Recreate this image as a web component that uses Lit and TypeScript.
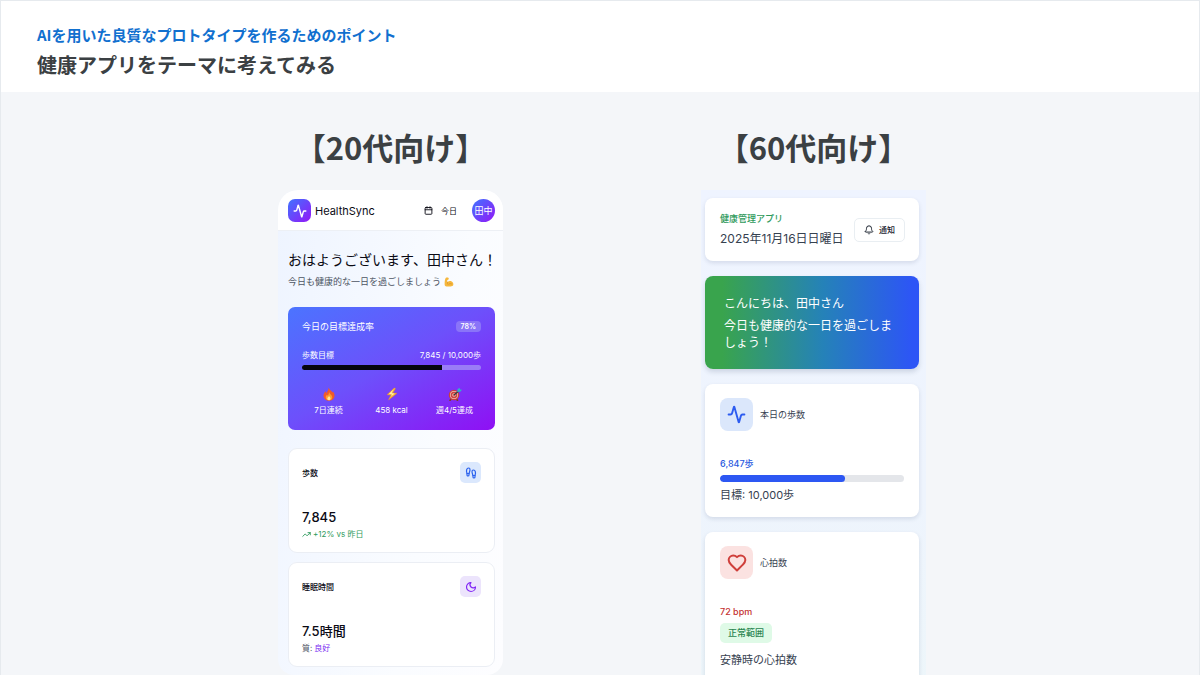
import { LitElement, html, css, svg, TemplateResult } from "lit";
import { customElement, property } from "lit/decorators.js";
import { styleMap } from "lit/directives/style-map.js";

const glyphs: Record<string, TemplateResult> = {
  pulse: svg`<path d="M22 12h-2.48a2 2 0 0 0-1.93 1.46l-2.35 8.36a.25.25 0 0 1-.48 0L9.24 2.18a.25.25 0 0 0-.48 0l-2.35 8.36A2 2 0 0 1 4.49 12H2"/>`,
  calendar: svg`<path d="M8 2v4M16 2v4M3 10h18"/><rect x="3" y="4" width="18" height="18" rx="2"/>`,
  footprints: svg`<path d="M4 16v-2.38C4 11.5 2.97 10.5 3 8c.03-2.72 1.49-6 4.5-6C9.37 2 10 3.8 10 5.5c0 3.11-2 5.66-2 8.68V16a2 2 0 1 1-4 0Z"/><path d="M20 20v-2.38c0-2.12 1.03-3.12 1-5.62-.03-2.72-1.49-6-4.5-6C14.63 6 14 7.8 14 9.5c0 3.11 2 5.66 2 8.68V20a2 2 0 1 0 4 0Z"/><path d="M16 17h4M4 13h4"/>`,
  moon: svg`<path d="M12 3a6 6 0 0 0 9 9 9 9 0 1 1-9-9Z"/>`,
  trend: svg`<path d="m22 7-8.5 8.5-5-5L2 17"/><path d="M16 7h6v6"/>`,
  bell: svg`<path d="M10.27 21a2 2 0 0 0 3.46 0"/><path d="M3.26 15.33A1 1 0 0 0 4 17h16a1 1 0 0 0 .74-1.67C19.41 13.96 18 12.5 18 8A6 6 0 0 0 6 8c0 4.5-1.41 5.96-2.74 7.33"/>`,
  heart: svg`<path d="M19 14c1.49-1.46 3-3.21 3-5.5A5.5 5.5 0 0 0 16.5 3c-1.76 0-3 .5-4.5 2-1.5-1.5-2.74-2-4.5-2A5.5 5.5 0 0 0 2 8.5c0 2.3 1.5 4.05 3 5.5l7 7Z"/>`,
};

const icon = (name: string, size: number) => html`<svg
  width=${size} height=${size} viewBox="0 0 24 24" fill="none" stroke="currentColor"
  stroke-width="2.4" stroke-linecap="round" stroke-linejoin="round" aria-hidden="true"
>${glyphs[name]}</svg>`;

const arm = html`<svg width="10" height="10" viewBox="0 0 24 24" aria-hidden="true">
  <path fill="#f6b73c" d="M4 2.5C6 1 9.5 1 11 2.5c1 1.500.2 4-1.500 4.500L8 6.500c-.6 2-.4 4 .6 6 2.400-2.800 6.500-3.500 9.900-1.500 3.500 2 4.900 6 3.500 9-1 2-3 2.500-6 2.500H6c-3 0-4.500-1.500-4.500-5C1.500 12 2 6 4 2.500Z"/>
  <path fill="none" stroke="#c98524" stroke-width="1.300" stroke-linecap="round" d="M8.600 12.500c-.6 1.500-.4 3 .4 4.500M12 17c2-1.500 4-1.500 6-.5"/>
</svg>`;

const fire = html`<svg width="14" height="14" viewBox="0 0 28 28" aria-hidden="true">
  <path fill="#ef5a2b" d="M13 1c2 4 6 7 8 10l1-2c2 3 3.500 6 3 9.500C24.500 24 20 27.500 14 27.500S3.500 24 3 18.500C2.600 14 5 11 7 8.500l1.500 3.500C11 9 13.500 5.500 13 1Z"/>
  <path fill="#fba02f" d="M14 10c1 3.500 6 6 6.500 10 .4 4-2.500 6.500-6.500 6.500S7 24 7.500 20c.2-2 1.500-3.500 2.500-4.500l1.500 2C13 15.500 14.300 13 14 10Z"/>
  <path fill="#ffe59a" d="M14 18c1 1.500 3 2.500 3 5s-1.500 3.500-3.200 3.500S10.500 25 10.700 23c.2-2 2.300-3 3.300-5Z"/>
</svg>`;

const bolt = html`<svg width="14" height="14" viewBox="0 0 28 28" aria-hidden="true">
  <path fill="#fbc13a" stroke="#e58b2a" stroke-width="1" stroke-linejoin="round" d="M18.500 2 4 15.500l8 .5-5 10L24 12.500l-8.500-.5 5.500-9Z"/>
  <path fill="#fff0b0" d="M16.500 5 8 14l6 .3-1.500 3.500 7-4.800-6.500-.5Z"/>
</svg>`;

const target = html`<svg width="14" height="14" viewBox="0 0 28 28" aria-hidden="true">
  <path stroke="#7a3b2a" stroke-width="3" stroke-linecap="round" d="m6 24-2 3M17 24l2 3"/>
  <circle cx="12" cy="16" r="10.500" fill="#c9413c"/>
  <circle cx="12" cy="16" r="8" fill="#e9bdb8"/>
  <circle cx="12" cy="16" r="6.500" fill="#cf423c"/>
  <circle cx="12" cy="16" r="3.600" fill="#e9bdb8"/>
  <circle cx="12" cy="16" r="1.800" fill="#cf423c"/>
  <path stroke="#2c3a44" stroke-width="2.200" d="m12 16 10-8.500"/>
  <path fill="#2fb4c8" d="m18.500 10 .5-5.500 4-3 1 3.500 4 .5-3.500 4Z"/>
</svg>`;

const shared = css`
  * { box-sizing: border-box; }
  h1, h2, h3, p { margin: 0; font-size: inherit; font-weight: 400; }
  svg { display: block; flex: none; }
  button { font: inherit; color: inherit; cursor: pointer; }
`;

@customElement("meter-bar")
class MeterBar extends LitElement {
  @property({ type: Number }) value = 0;
  @property() label = "";
  static styles = css`
    :host { display: block; }
    .track { height: var(--meter-height, 5px); border-radius: 4px; overflow: hidden; background: var(--meter-track); }
    .fill { height: 100%; border-radius: var(--meter-cap, 0); background: var(--meter-fill); }
  `;
  render() {
    return html`<div class="track" role="progressbar" aria-label=${this.label}
      aria-valuenow=${this.value} aria-valuemin="0" aria-valuemax="100">
      <div class="fill" style=${styleMap({ width: `${this.value}%` })}></div>
    </div>`;
  }
}

@customElement("young-app")
class YoungApp extends LitElement {
  static styles = [shared, css`
    :host {
      display: block;
      overflow: hidden;
      border-radius: 20px 20px 16px 16px;
      background: linear-gradient(100deg, #eef4ff 0%, #fafcff 65%, #fdfdff 100%);
      color: #0a0a14;
      font-size: 8px;
      line-height: 12px;
    }
    .bar { display: flex; align-items: center; padding: 9px 8px 8px 10px; background: #fff; border-bottom: 1px solid #edf0f5; }
    .logo, .avatar {
      display: flex; align-items: center; justify-content: center;
      width: 23px; height: 23px; color: #fff;
      background: linear-gradient(135deg, #3f74ff, #9417f7);
    }
    .logo { border-radius: 7px; }
    .avatar { border: 0; padding: 0; border-radius: 50%; font-size: 9px; }
    .name { flex: 1; margin-left: 4px; font-size: 11px; line-height: 16px; }
    .today { display: flex; align-items: center; gap: 8px; margin-right: 15px; border: 0; padding: 0; background: none; }
    .body { padding: 19px 8px 8px 10px; }
    .hello { font-size: 14px; line-height: 20px; white-space: nowrap; }
    .lead { display: flex; align-items: center; gap: 3px; margin-top: 5px; font-size: 9px; line-height: 14px; color: #4d5563; }
    .goal {
      margin: 18px 0; padding: 14px; border-radius: 7px; color: #fff;
      background: linear-gradient(150deg, #4b74ff 0%, #6d50fb 48%, #8f10f4 100%);
      --meter-fill: #05050f; --meter-track: #9a7cf6;
    }
    .row { display: flex; align-items: center; justify-content: space-between; }
    .goal-title { font-size: 9px; line-height: 11px; }
    .badge { padding: 0 5px; border-radius: 4px; background: #8a74f8; font-size: 7px; line-height: 11px; font-weight: 600; }
    .steps { margin: 17px 0 4px; }
    .facts { display: grid; grid-template-columns: repeat(3, 1fr); gap: 10px; margin-top: 17px; }
    .fact { display: flex; flex-direction: column; align-items: center; gap: 3px; white-space: nowrap; }
    .stats { display: grid; gap: 9px; }
    .stat { padding: 13px 13px 12px; border: 1px solid #ebeef4; border-radius: 9px; background: #fff; }
    .label { font-weight: 500; }
    .tile { display: flex; align-items: center; justify-content: center; width: 21px; height: 21px; border-radius: 5px; }
    .blue { background: #dbe8fd; color: #2b62ee; }
    .violet { background: #ece4fc; color: #8329f5; }
    .figure { margin-top: 24px; font-size: 13px; line-height: 20px; font-weight: 500; }
    .note { display: flex; align-items: center; gap: 2px; margin-top: 1px; color: #4d5563; }
    .up { color: #2f9a5c; }
    .good { color: #7c2df2; }
  `];
  render() {
    return html`
      <header class="bar">
        <span class="logo">${icon("pulse", 14)}</span>
        <h3 class="name">HealthSync</h3>
        <button class="today" type="button">${icon("calendar", 9)}今日</button>
        <button class="avatar" type="button">田中</button>
      </header>
      <div class="body">
        <p class="hello">おはようございます、田中さん！</p>
        <p class="lead">今日も健康的な一日を過ごしましょう ${arm}</p>
        <section class="goal">
          <div class="row"><h3 class="goal-title">今日の目標達成率</h3><span class="badge">78%</span></div>
          <div class="row steps"><span>歩数目標</span><span>7,845 / 10,000歩</span></div>
          <meter-bar .value=${78} label="歩数目標"></meter-bar>
          <div class="facts">
            <div class="fact">${fire}<span>7日連続</span></div>
            <div class="fact">${bolt}<span>458 kcal</span></div>
            <div class="fact">${target}<span>週4/5達成</span></div>
          </div>
        </section>
        <div class="stats">
          <section class="stat">
            <div class="row"><h3 class="label">歩数</h3><span class="tile blue">${icon("footprints", 12)}</span></div>
            <p class="figure">7,845</p>
            <p class="note up">${icon("trend", 9)}<span>+12% vs 昨日</span></p>
          </section>
          <section class="stat">
            <div class="row"><h3 class="label">睡眠時間</h3><span class="tile violet">${icon("moon", 12)}</span></div>
            <p class="figure">7.5時間</p>
            <p class="note"><span>質:</span><span class="good">良好</span></p>
          </section>
        </div>
      </div>`;
  }
}

@customElement("senior-app")
class SeniorApp extends LitElement {
  static styles = [shared, css`
    :host {
      display: flex; flex-direction: column; gap: 15px;
      padding: 8px 7px 15px 4px;
      background: linear-gradient(180deg, #eff4ff 0%, #eef4fd 60%, #edf6fa 100%);
      color: #364150;
      font-size: 9px;
      line-height: 14px;
    }
    .card { padding: 14px 15px; border-radius: 8px; background: #fff; box-shadow: 0 2px 4px rgba(30, 50, 90, 0.13); }
    .top { display: flex; align-items: center; justify-content: space-between; padding: 14px 14px 13px 15px; }
    .app { color: #2f9a5c; font-weight: 500; }
    .date { margin-top: 4px; font-size: 12px; line-height: 18px; white-space: nowrap; }
    .notify {
      display: flex; align-items: center; gap: 5px; height: 24px; padding: 0 9px;
      border: 1px solid #e9eef2; border-radius: 5px; background: #fff; color: #1c2430;
      font-size: 8px; font-weight: 500; white-space: nowrap;
    }
    .welcome {
      padding: 19px 19px 18px; border-radius: 8px; color: #fff;
      font-size: 12px; line-height: 17px;
      background: linear-gradient(90deg, #39a44d 8%, #2582b8 55%, #2d55f6 97%);
      box-shadow: 0 3px 5px rgba(30, 50, 90, 0.16);
    }
    .welcome p + p { margin-top: 5px; }
    .head { display: flex; align-items: center; gap: 7px; }
    .tile { display: flex; align-items: center; justify-content: center; width: 33px; height: 33px; border-radius: 8px; }
    .blue { background: #dbe7fb; color: #2d5cf0; }
    .red { background: #fbe2e1; color: #cf3f3b; }
    .value { margin: 26px 0 4px; font-weight: 500; }
    .value-blue { color: #2a59e0; }
    .value-red { color: #c4302f; }
    .caption { margin-top: 5px; font-size: 11px; line-height: 16px; }
    .status { display: inline-block; margin-bottom: 4px; padding: 3px 8px; border-radius: 5px; background: #dffae7; color: #2a8550; font-weight: 500; }
    meter-bar { --meter-height: 7px; --meter-fill: #2d57f3; --meter-track: #e4e6ea; --meter-cap: 4px; }
  `];
  render() {
    return html`
      <header class="card top">
        <div><h3 class="app">健康管理アプリ</h3><p class="date">2025年11月16日日曜日</p></div>
        <button class="notify" type="button">${icon("bell", 10)}通知</button>
      </header>
      <section class="welcome">
        <p>こんにちは、田中さん</p>
        <p>今日も健康的な一日を過ごしましょう！</p>
      </section>
      <section class="card">
        <div class="head"><span class="tile blue">${icon("pulse", 19)}</span><h3>本日の歩数</h3></div>
        <p class="value value-blue">6,847歩</p>
        <meter-bar .value=${68} label="本日の歩数"></meter-bar>
        <p class="caption">目標: 10,000歩</p>
      </section>
      <section class="card">
        <div class="head"><span class="tile red">${icon("heart", 20)}</span><h3>心拍数</h3></div>
        <p class="value value-red">72 bpm</p>
        <span class="status">正常範囲</span>
        <p class="caption">安静時の心拍数</p>
      </section>`;
  }
}

@customElement("app-root")
class AppRoot extends LitElement {
  static styles = [shared, css`
    :host {
      display: flex; flex-direction: column;
      box-sizing: border-box; height: 100vh; overflow: hidden;
      border: 1px solid #e6eaee; border-bottom: 0;
      background: #f4f6f9; color: #3b4043;
      font-family: Inter, "Noto Sans CJK JP", sans-serif;
    }
    .masthead { flex: none; padding: 24px 36px 12px; background: #fff; font-family: "Noto Sans CJK JP", sans-serif; }
    .kicker { font-size: 15px; line-height: 20px; font-weight: 700; color: #1170cf; }
    .title { margin-top: 5px; font-size: 20px; line-height: 30px; font-weight: 700; }
    .compare {
      flex: 1; min-height: 0; overflow: hidden;
      display: grid; grid-template-columns: repeat(2, minmax(0, 225px)); column-gap: 198px;
      justify-content: center; align-items: start;
      padding: 35px 32px 0 36px;
    }
    .audience {
      display: flex; justify-content: center; margin-bottom: 23px;
      font-family: "Noto Sans CJK JP", sans-serif;
      font-size: 31px; line-height: 40px; font-weight: 700; white-space: nowrap;
    }
  `];
  render() {
    return html`
      <header class="masthead">
        <p class="kicker">AIを用いた良質なプロトタイプを作るためのポイント</p>
        <h1 class="title">健康アプリをテーマに考えてみる</h1>
      </header>
      <main class="compare">
        <section><h2 class="audience">【20代向け】</h2><young-app></young-app></section>
        <section><h2 class="audience">【60代向け】</h2><senior-app></senior-app></section>
      </main>`;
  }
}
